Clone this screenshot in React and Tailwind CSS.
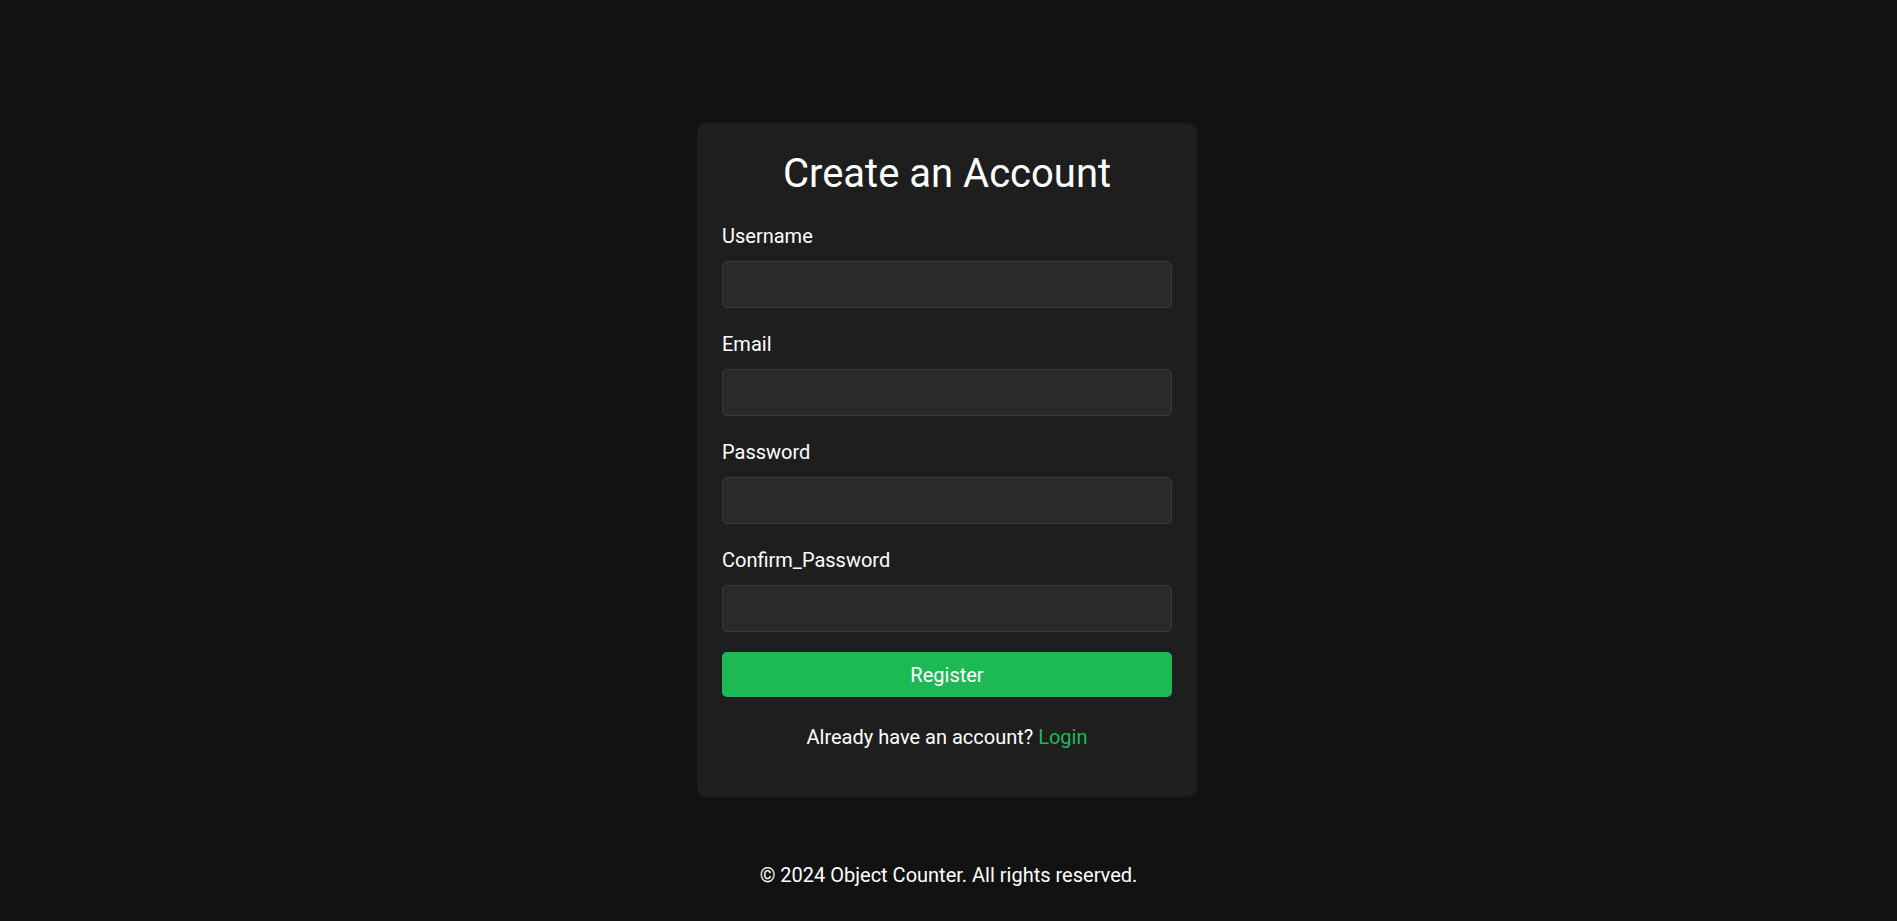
import { useState } from 'react';

const fields = [
  { name: 'username', label: 'Username', type: 'text' },
  { name: 'email', label: 'Email', type: 'email' },
  { name: 'password', label: 'Password', type: 'password' },
  { name: 'confirm_password', label: 'Confirm_Password', type: 'password' },
];

export default function App() {
  const [form, setForm] = useState({ username: '', email: '', password: '', confirm_password: '' });

  const update = (e) => setForm(f => ({ ...f, [e.target.name]: e.target.value }));

  return (
    <div className="min-h-screen bg-[#121212] text-white flex flex-col items-center font-['Roboto','Liberation_Sans',sans-serif]">

      {/* Register card */}
      <div className="mt-[123px] mr-[3px] w-[500px] bg-[#1e1e1e] rounded-[10px] p-[25px]">
        <h2 className="text-[40px] leading-[47px] font-normal text-center mt-[2px] mb-[28px]">Create an Account</h2>

        <form onSubmit={e => e.preventDefault()}>
          {fields.map((f, i) => (
            <div key={f.name} className={i === fields.length - 1 ? 'mb-[20px]' : 'mb-[25px]'}>
              <label htmlFor={f.name} className="block text-[20px] leading-[22.5px] mb-[13.5px]">{f.label}</label>
              <input
                id={f.name}
                name={f.name}
                type={f.type}
                value={form[f.name]}
                onChange={update}
                className="block w-full h-[47px] px-3 bg-[#2a2a2a] border border-[#3a3a3a] rounded-[5px] text-white text-[20px] outline-none"
              />
            </div>
          ))}

          <button
            type="submit"
            className="block w-full h-[45px] bg-[#1db954] rounded-[5px] text-white text-[20px]"
          >
            Register
          </button>
        </form>

        <p className="text-center text-[20px] leading-[22.5px] mt-[29px] mb-[23.5px]">
          Already have an account? <a href="#" className="text-[#1db954]">Login</a>
        </p>
      </div>

      {/* Footer */}
      <footer className="mt-[67px] text-center text-[20px] leading-[22.5px]">
        © 2024 Object Counter. All rights reserved.
      </footer>
    </div>
  );
}
